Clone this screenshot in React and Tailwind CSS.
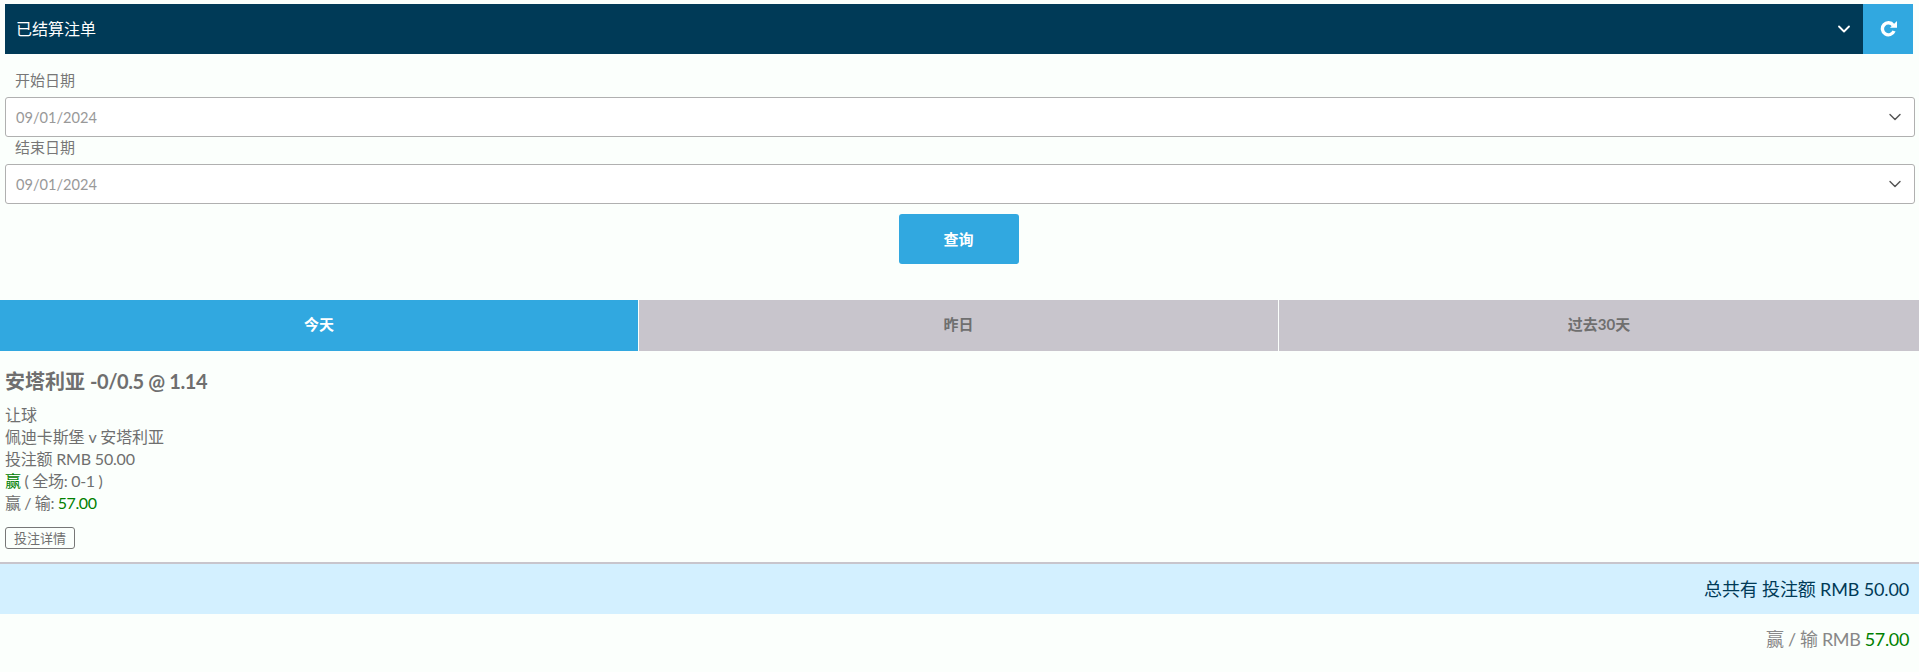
import { ChevronDown } from 'lucide-react'

const FONT = "font-['Lato','Noto_Sans_CJK_SC',sans-serif]"

function RefreshIcon() {
  return (
    <svg width="17" height="16" viewBox="0 0 17 16" fill="none">
      <path d="M13.2 4.2A6 6 0 1 0 14 10" stroke="currentColor" strokeWidth="3.4" />
      <path d="M10 6.8H17V0Z" fill="currentColor" />
    </svg>
  )
}

function DateField({ label, value }) {
  return (
    <div>
      <div className="h-[33px] pl-[15px] pt-[6px] text-[15px] leading-[20px] text-[#777]">{label}</div>
      <div className="ml-[5px] mr-[4px] flex h-[40px] items-center justify-between rounded-[3px] border border-[#b0b0b0] bg-white pl-[10px] pr-[9px]">
        <span className="pt-[2px] text-[14.6px] text-[#999]">{value}</span>
        <ChevronDown size={20} strokeWidth={1.7} className="text-[#555]" />
      </div>
    </div>
  )
}

export default function App() {
  return (
    <div className={`${FONT} min-h-[672px] bg-[#fbfffc] pt-[4px] text-[16px] text-[#6f6f6f]`}>
      {/* Top bar */}
      <div className="ml-[5px] mr-[6px] flex h-[50px]">
        <div className="flex flex-1 items-center justify-between bg-[#003a57] pl-[11px] pr-[9px] text-[16px] text-white">
          <span>已结算注单</span>
          <ChevronDown size={20} strokeWidth={2.2} />
        </div>
        <button className="flex w-[50px] items-center justify-center bg-[#31a8e0] text-white">
          <RefreshIcon />
        </button>
      </div>

      {/* Date range */}
      <div className="mt-[10px]">
        <DateField label="开始日期" value="09/01/2024" />
      </div>
      <div className="-mt-[6px]">
        <DateField label="结束日期" value="09/01/2024" />
      </div>
      <div className="mt-[10px] flex justify-center pr-[2px]">
        <button className="h-[50px] w-[120px] rounded-[3px] bg-[#31a8e0] text-[15px] font-bold text-white">查询</button>
      </div>

      {/* Tabs */}
      <div className="mt-[36px] grid h-[51px] grid-cols-[638px_639px_1fr] gap-px text-[15px] font-bold">
        <button className="bg-[#31a8e0] pb-[2px] text-white">今天</button>
        <button className="bg-[#c8c5cc] pb-[2px] text-[#6f6f6f]">昨日</button>
        <button className="bg-[#c8c5cc] pb-[2px] text-[#6f6f6f]">过去30天</button>
      </div>

      {/* Bet */}
      <div className="h-[213px] border-b-2 border-[#c8c5cc] px-[5px] pt-[16px]">
        <h3 className="text-[20px] font-bold leading-[28px]">
          安塔利亚 <span className="tracking-[-0.4px]">-0/0.5 @ 1.14</span>
        </h3>
        <div className="mt-[9px] leading-[22px]">
          <div>让球</div>
          <div className="tracking-[-0.1px]">佩迪卡斯堡 v 安塔利亚</div>
          <div className="tracking-[-0.2px]">投注额 RMB 50.00</div>
          <div className="tracking-[-0.3px]"><span className="text-[#008000]">赢</span> ( 全场: 0-1 )</div>
          <div className="tracking-[-0.4px]">赢 / 输: <span className="text-[#008000]">57.00</span></div>
        </div>
        <button className="mt-[13px] block h-[22px] w-[70px] rounded-[3px] border border-[#777] text-[13px] leading-[20px]">投注详情</button>
      </div>

      {/* Totals */}
      <div className="flex h-[50px] items-center justify-end bg-[#d3f0ff] pr-[10px] text-[18px] tracking-[-0.15px] text-[#003a57]">
        总共有 投注额 RMB 50.00
      </div>
      <div className="flex h-[50px] items-center justify-end pr-[10px] text-[18px] tracking-[-0.35px] text-[#888]">
        <span>赢 / 输 RMB <span className="text-[#008000]">57.00</span></span>
      </div>
    </div>
  )
}
